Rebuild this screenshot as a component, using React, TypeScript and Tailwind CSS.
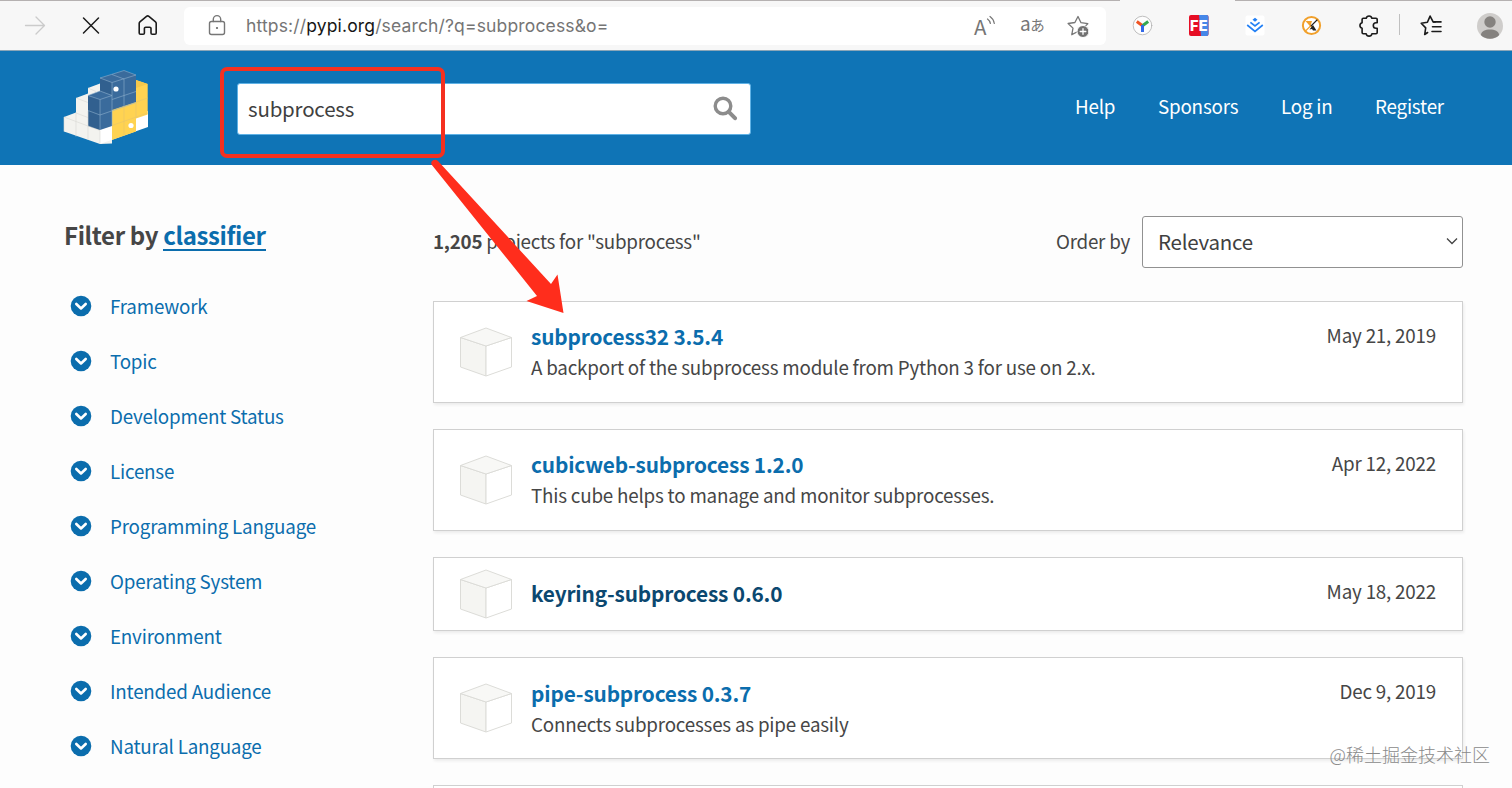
import type { ReactNode } from "react";

interface Project {
  name: string;
  description?: string;
  date: string;
  visited?: boolean;
}

const PROJECTS: Project[] = [
  {
    name: "subprocess32 3.5.4",
    description:
      "A backport of the subprocess module from Python 3 for use on 2.x.",
    date: "May 21, 2019",
  },
  {
    name: "cubicweb-subprocess 1.2.0",
    description: "This cube helps to manage and monitor subprocesses.",
    date: "Apr 12, 2022",
  },
  { name: "keyring-subprocess 0.6.0", date: "May 18, 2022", visited: true },
  {
    name: "pipe-subprocess 0.3.7",
    description: "Connects subprocesses as pipe easily",
    date: "Dec 9, 2019",
  },
];

const FILTERS = [
  "Framework",
  "Topic",
  "Development Status",
  "License",
  "Programming Language",
  "Operating System",
  "Environment",
  "Intended Audience",
  "Natural Language",
];

// Every toolbar icon sits in a 28px box
const BarIcon = ({
  className = "",
  children,
}: {
  className?: string;
  children: ReactNode;
}) => (
  <svg
    viewBox="0 0 28 28"
    className={`size-7 flex-none ${className}`}
    fill="none"
    strokeLinecap="round"
    strokeLinejoin="round"
    strokeWidth="1.6"
  >
    {children}
  </svg>
);

const BrowserBar = () => (
  <div className="relative flex h-[51px] flex-none items-center border-b border-[#8ba6b8] bg-[#f7f7f7] pb-px">
    <div className="absolute inset-x-0 top-0 flex justify-between">
      <div className="h-px w-[1120px] bg-[#b5b1b1]" />
      <div className="h-px w-[277px] bg-[#b5b1b1]" />
    </div>

    <BarIcon className="ml-[21px] stroke-[#cbcbcb]">
      <path d="M4.5 14.5h18.5M15 6l8.500 8.500L15 23" strokeWidth="1.3" />
    </BarIcon>
    <BarIcon className="ml-7 stroke-[#1b1b1b]">
      <path d="M6.500 7l15 15M21.500 7l-15 15" strokeWidth="1.5" />
    </BarIcon>
    <BarIcon className="ml-[29px] stroke-[#1b1b1b]">
      <path d="M5.200 12.300a2 2 0 0 1 .7-1.500l6.600-5.400a1.900 1.900 0 0 1 2.400 0l6.600 5.400a2 2 0 0 1 .7 1.500v9.700a1.300 1.300 0 0 1-1.300 1.300h-2.600a1.300 1.300 0 0 1-1.300-1.300v-4.500a1.300 1.300 0 0 0-1.300-1.300h-4a1.300 1.300 0 0 0-1.300 1.300V22a1.300 1.300 0 0 1-1.300 1.300H6.500A1.300 1.300 0 0 1 5.200 22z" />
    </BarIcon>

    <div className="ml-[22px] mt-0.5 flex h-[38px] w-[922px] flex-none items-center rounded-md bg-white">
      <BarIcon className="ml-[19px] stroke-[#767676]">
        <rect x="6.500" y="9.500" width="15" height="13" rx="2" strokeWidth="1.4" />
        <path d="M10.300 9.500V7.300a3.700 3.700 0 0 1 7.400 0v2.200" strokeWidth="1.4" />
        <circle cx="14" cy="16" r="1.100" className="fill-[#666] stroke-none" />
      </BarIcon>
      <div className="ml-[15px] w-[712px] whitespace-nowrap font-[Inter,sans-serif] text-[17.500px] leading-[38px] tracking-[0.150px] text-[#757575]">
        https://<span className="text-[#151515]">pypi.org</span>
        /search/?q=subprocess&amp;o=
      </div>
      <div className="ml-4 flex w-[26px] items-start text-[20.500px] leading-[34px] text-[#767676]">
        <span className="w-3">A</span>
        <svg viewBox="0 0 10 12" className="mt-1.5 h-3 w-2.5 fill-none stroke-[#767676]">
          <path d="M1.500 4c1.600 1.100 2.500 2.700 2.900 4.500M4 1.500c2.500 1.700 3.800 4.200 4.300 7" strokeWidth="1.200" strokeLinecap="round" />
        </svg>
      </div>
      <div className="mb-1 ml-[20px] w-[25px] whitespace-nowrap font-['Noto_Sans_CJK_JP',sans-serif] text-[19px] leading-[34px] tracking-[-0.500px] text-[#767676]">
        a<span className="text-[14.500px]">あ</span>
      </div>
      <BarIcon className="ml-[19px] stroke-[#767676]">
        <path
          d="M14 4.500l3 6.200 6.800 1-4.900 4.700 1 6.200-6-3.100-6.100 3.200 1.200-6.600-4.900-4.600 6.800-1z"
          strokeWidth="1.3"
        />
        <circle cx="19" cy="19.500" r="6" className="fill-[#727272] stroke-white" strokeWidth="1" />
        <path d="M19 16.700v5.600M16.200 19.500h5.600" className="stroke-white" strokeWidth="1.3" />
      </BarIcon>
    </div>

    <BarIcon className="ml-[22px]">
      <circle cx="14.500" cy="14.500" r="9.300" className="fill-[#fdfdfd] stroke-[#b0b0b0]" strokeWidth="0.8" />
      <g strokeLinecap="butt" strokeWidth="3">
        <path d="M14.200 14.500L8.800 10.500" className="stroke-[#f05423]" />
        <path d="M14.800 14.500l5.400-4" className="stroke-[#35a853]" />
        <path d="M14.500 14v7" className="stroke-[#3369e8]" />
      </g>
    </BarIcon>
    <BarIcon className="ml-[29px]">
      <rect x="4" y="4" width="19.500" height="21" rx="2" className="fill-[#e60e25]" />
      <path d="M14 4h7.500a2 2 0 0 1 2 2v17a2 2 0 0 1-2 2H16z" className="fill-[#4687e8]" />
      <text
        x="5"
        y="20"
        textLength="17.500"
        className="fill-white stroke-none font-[Inter,sans-serif] text-[14.500px] font-extrabold"
      >
        FE
      </text>
    </BarIcon>
    <BarIcon className="ml-[28px]">
      <rect x="4.500" y="4.500" width="19" height="20" rx="2" className="fill-white" />
      <g className="stroke-[#2380f5]" strokeWidth="1.700" strokeLinecap="butt" strokeLinejoin="miter">
        <path d="M6.200 14l7.800 6.300 7.800-6.300M9.400 11.300l4.600 3.700 4.600-3.700" />
        <path d="M11.500 8.700l2.500 2 2.500-2-2.500-1.900z" className="fill-[#2380f5] stroke-none" />
      </g>
    </BarIcon>
    <BarIcon className="ml-[28px]">
      <circle cx="14.500" cy="14.500" r="8.600" className="fill-white stroke-[#f1a02b]" strokeWidth="2" />
      <path d="M8.500 10h6.500l-1.500 5z" className="fill-[#f1a02b] stroke-none" />
      <path d="M10.500 10.700l4 5" className="stroke-[#f1a02b]" strokeWidth="1.800" />
      <path d="M20 9l-6 6" className="stroke-[#222]" strokeWidth="1.100" />
      <path d="M13 15.500L8.500 20" className="stroke-[#f1a02b]" strokeWidth="1.100" />
      <path d="M12.500 18.500l3.500-4.500 3.500 5.500h-3.500l-1-1.500z" className="fill-[#222] stroke-none" />
    </BarIcon>
    <BarIcon className="ml-[30px] stroke-[#1b1b1b]">
      <path
        d="M11.200 7.300a2.900 2.900 0 0 1 5.700 0h4.100a1.200 1.200 0 0 1 1.200 1.200v3.300h-1.200a2.700 2.700 0 0 0 0 5.400h1.200v4.400a1.200 1.200 0 0 1-1.200 1.200h-4.100a2.900 2.900 0 0 1-5.700 0H8.300a1.200 1.200 0 0 1-1.200-1.200v-4.300a2.900 2.900 0 0 1 0-5.600V8.500a1.200 1.200 0 0 1 1.200-1.200z"
      />
    </BarIcon>
    <div className="ml-4 h-[21px] w-px flex-none bg-[#c0c0c0]" />
    <BarIcon className="ml-[18px] stroke-[#1b1b1b]">
      <path d="M9.600 21.500L6.700 23.500l1-6.600-4.500-4.600 6.200-1 2.700-6.200 3 5.800h2.200" />
      <path d="M15.500 10.900h7.500M14.500 15.700h8.500M14 20.500h9" />
    </BarIcon>
    <BarIcon className="ml-[30px]">
      <circle cx="14" cy="15" r="13" className="fill-[#cfcdcb]" />
      <circle cx="14" cy="11" r="5.700" className="fill-[#85827f]" />
      <path d="M4.800 24c1-4 4.200-5.400 9.200-5.400s8.200 1.400 9.200 5.400A13 13 0 0 1 4.800 24z" className="fill-[#85827f]" />
    </BarIcon>
  </div>
);

const Logo = () => (
  <svg viewBox="62 66 88 80" className="h-20 w-[88px] flex-none" strokeLinejoin="round">
    {/* white cubes */}
    <path
      d="M64 117l12-4.500V98l12-4.500V88l12-4.500 12 10v50L100 144l-36-12.500z"
      className="fill-[#f3f3ef]"
    />
    <path d="M100 127l48-16v16l-48 17z" className="fill-white" />
    {/* yellow cubes */}
    <path d="M112 108l24-8V80l11.700 4v30.500L136 118.500v13L112 140z" className="fill-[#ffd351]" />
    <path d="M136 80l11.700 4-11.700 4z" className="fill-[#f5c84c]" />
    {/* blue cubes */}
    <path d="M88 95.500L100 91V78l24-7.500 12 4.500v27l-24 8v16l-12 4-12-4z" className="fill-[#3a6b9c]" />
    <path d="M88 95.500v30.500l12 4V99.500zM100 78v13l12 4V82.500z" className="fill-[#31608f]" />
    <g className="fill-none stroke-[#8fb0cd]" strokeWidth="0.600">
      <path d="M88 95.500l12-4.500 12 4.500-12 4zM100 99.500V130M88 110.500l12 4.500 36-12.500M100 78l24-7.500 12 4.500-24 7.500zM112 74.500l12 4.500v27.500M112 82.500V126M112 99.500l24-8" />
    </g>
    <g className="fill-none stroke-[#d9d9d3]" strokeWidth="0.600">
      <path d="M64 117l12 4.500 12 4.500 12 4.500V144M76 112.500v24M88 111v29M64 117v14.500M76 98l12 4.500M76 113l12 4.500M88 88l8 3.500" />
    </g>
    <g className="fill-none stroke-[#e6c56b]" strokeWidth="0.600">
      <path d="M124 106.500v29M136 102v16M112 125.500l35.700-12.500M136 102l11.700-4" />
    </g>
    <circle cx="116" cy="89" r="2.600" className="fill-white" />
    <circle cx="131" cy="125.500" r="2.600" className="fill-white" />
  </svg>
);

const Header = () => (
  <header className="flex h-[114px] flex-none items-start bg-[#0f74b6] pl-[62px]">
    <div className="mt-[15px]">
      <Logo />
    </div>
    <div className="relative ml-[87px] mt-8 flex h-[52px] w-[514px] items-center justify-between rounded-[3px] border border-[#5fb2e6] bg-white pl-2.5 pr-3">
      <span className="mb-0.5 text-[20.500px] leading-[48px] tracking-[-0.200px] text-[#404040]">
        subprocess
      </span>
      <svg viewBox="0 0 26 26" className="mb-0.5 size-[26px] fill-none stroke-[#8c8c8c]">
        <circle cx="11" cy="11" r="7.800" strokeWidth="3.400" />
        <path d="M16.800 16.800l6.200 6.400" strokeWidth="4" strokeLinecap="round" />
      </svg>
      <div className="absolute -left-[18px] -top-[17px] h-[91px] w-[225px] rounded-[7px] border-4 border-[#f5301f]" />
    </div>
    <nav className="ml-auto mr-[68px] mt-[39px] flex whitespace-nowrap text-[18.800px] leading-8 tracking-[-0.200px] text-white">
      <a className="w-[83px]">Help</a>
      <a className="w-[123px]">Sponsors</a>
      <a className="w-[94px]">Log in</a>
      <a className="w-[69px]">Register</a>
    </nav>
  </header>
);

const Sidebar = () => (
  <aside className="w-[369px] flex-none pt-[50px]">
    <h2 className="whitespace-nowrap text-[24px] font-bold leading-10 tracking-[-0.370px] text-[#464646]">
      Filter by{" "}
      <a className="inline-block h-9 border-b-2 border-[#0b6dad] text-[#0b6dad]">classifier</a>
    </h2>
    <ul className="mt-[23px]">
      {FILTERS.map((label) => (
        <li key={label} className="flex h-[55px] items-center pl-1.5">
          <svg viewBox="0 0 22 22" className="size-[22px] flex-none">
            <circle cx="11" cy="11" r="10.300" className="fill-[#0b6dad]" />
            <path
              d="M6.300 9l4.700 4.500L15.700 9"
              className="fill-none stroke-white"
              strokeWidth="2.600"
              strokeLinecap="round"
              strokeLinejoin="round"
            />
          </svg>
          <span className="ml-[18px] text-[18.800px] leading-8 tracking-[-0.200px] text-[#0b6dad]">
            {label}
          </span>
        </li>
      ))}
    </ul>
  </aside>
);

const Cube = () => (
  <svg viewBox="0 0 54 52" className="h-[52px] w-[54px] flex-none stroke-[#dcdcd8]" strokeLinejoin="round">
    <path d="M1.500 11.500l25.500 8.500v30L1.500 41z" className="fill-[#f5f5f2]" />
    <path d="M27 20l25.500-8.500V41L27 50z" className="fill-white" />
    <path d="M1.500 11.500l25.500-9.500 25.500 9.500-25.500 8.500z" className="fill-[#f8f8f6]" />
  </svg>
);

const ProjectCard = ({ name, description, date, visited }: Project) => (
  <li
    className={`flex items-center border border-[#d0d0d0] bg-white pl-[25px] pr-[26px] shadow-[1px_2px_3px_rgba(0,0,0,0.07)] ${
      description ? "h-[102.300px]" : "h-[74px]"
    }`}
  >
    <Cube />
    <div className="ml-[18px] flex-1 whitespace-nowrap">
      <h3
        className={`text-[20.800px] font-bold tracking-[-0.150px] ${
          description ? "leading-[30px]" : "mb-0.5 leading-[30px]"
        } ${visited ? "text-[#0b4870]" : "text-[#0b6dad]"}`}
      >
        {name}
      </h3>
      {description && (
        <p className="text-[18.800px] leading-[31px] tracking-[-0.200px] text-[#464646]">
          {description}
        </p>
      )}
    </div>
    <time
      className={`text-[18.800px] leading-8 tracking-[-0.200px] text-[#464646] ${
        description ? "mb-[34px]" : "mb-1.5"
      }`}
    >
      {date}
    </time>
  </li>
);

const Results = () => (
  <main className="w-[1030px] flex-none pt-[51px]">
    <div className="flex h-[52px] items-center text-[18.800px] tracking-[-0.230px] text-[#464646]">
      <p className="mb-0.5">
        <b>1,205</b> projects for "subprocess"
      </p>
      <span className="mb-0.5 ml-auto">Order by</span>
      <div className="ml-3 flex h-[52px] w-[321px] items-center justify-between rounded-[3px] border border-[#919191] bg-white pb-0.5 pl-[15px] pr-1 text-[20.500px] text-[#404040]">
        Relevance
        <svg viewBox="0 0 12 12" className="size-3 fill-none stroke-[#444]">
          <path d="M1 3.500l5 5 5-5" strokeWidth="1.300" />
        </svg>
      </div>
    </div>
    <ul className="mt-[32.500px] flex flex-col gap-[26px]">
      {PROJECTS.map((project) => (
        <ProjectCard key={project.name} {...project} />
      ))}
      <li className="h-[103px] border border-[#d0d0d0] bg-white" />
    </ul>
  </main>
);

export default function App() {
  return (
    <div className="relative flex h-[788px] w-[1512px] flex-col overflow-hidden bg-[#fdfdfd] font-['Noto_Sans_CJK_SC',sans-serif]">
      <BrowserBar />
      <Header />
      <div className="flex min-h-0 flex-1 pl-16">
        <Sidebar />
        <Results />
      </div>

      {/* arrow from the search box to the first result */}
      <svg viewBox="0 0 140 160" className="absolute left-[427px] top-[156px] h-40 w-[140px]">
        <path
          d="M4.500 8.500C3 5 8 2 11 5L124 128l6.500-9.500 6 38.500-37-12 10.500-5z"
          className="fill-[#ff2d1c]"
        />
      </svg>

      <div className="absolute bottom-[18px] right-[22px] whitespace-nowrap text-[18px] font-light leading-8 text-[#8a8a8a]">
        @稀土掘金技术社区
      </div>
    </div>
  );
}
